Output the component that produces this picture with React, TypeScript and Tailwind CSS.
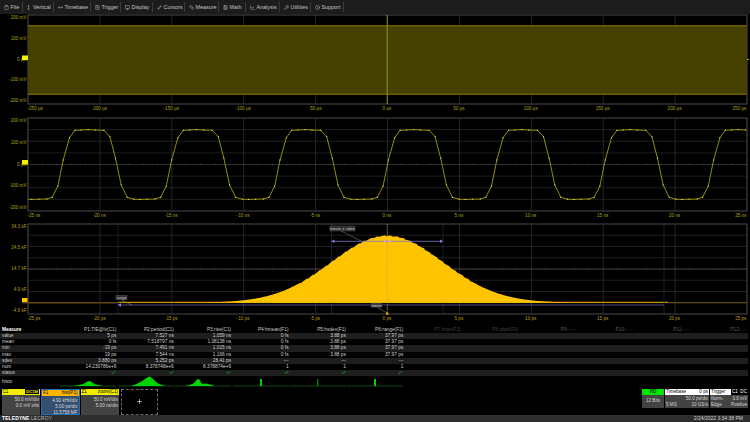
import {
  Check,
  ChartLine,
  Calculator,
  Clipboard,
  Info,
  Monitor,
  MoveDiagonal,
  MoveHorizontal,
  MoveVertical,
  Plus,
  Ruler,
  SquareArrowUp,
  Wrench,
} from "lucide-react";
import type { ReactNode } from "react";

const menu = [
  { name: "File", Icon: Clipboard, w: "w-[22.5px]" },
  { name: "Vertical", Icon: MoveVertical, w: "w-[31.5px]" },
  { name: "Timebase", Icon: MoveHorizontal, w: "w-[37px]" },
  { name: "Trigger", Icon: SquareArrowUp, w: "w-[30px]" },
  { name: "Display", Icon: Monitor, w: "w-[32px]" },
  { name: "Cursors", Icon: MoveDiagonal, w: "w-[32px]" },
  { name: "Measure", Icon: Ruler, w: "w-[34px]" },
  { name: "Math", Icon: Calculator, w: "w-[27px]" },
  { name: "Analysis", Icon: ChartLine, w: "w-[34px]" },
  { name: "Utilities", Icon: Wrench, w: "w-[31px]" },
  { name: "Support", Icon: Info, w: "w-[33px]" },
];

const headers = [
  ["P1:TIE@lv(C1)", "text-[#c8c8c8]"],
  ["P2:period(C1)", "text-[#c8c8c8]"],
  ["P3:rise(C1)", "text-[#c8c8c8]"],
  ["P4:hmean(F1)", "text-[#c8c8c8]"],
  ["P5:hsdev(F1)", "text-[#c8c8c8]"],
  ["P6:range(F1)", "text-[#c8c8c8]"],
  ["P7:fmax(F3)", "text-[#3f3f3f]"],
  ["P8:pkpk(F3)", "text-[#3f3f3f]"],
  ["P9:- - -", "text-[#5a5a5a]"],
  ["P10:- - -", "text-[#5a5a5a]"],
  ["P11:- - -", "text-[#5a5a5a]"],
  ["P12:- - -", "text-[#5a5a5a]"],
];

const rows = [
  { name: "value", cells: ["5 ps", "7.527 ns", "1.059 ns", "0 fs", "3.88 ps", "37.97 ps"] },
  { name: "mean", cells: ["0 fs", "7.518797 ns", "1.08138 ns", "0 fs", "3.88 ps", "37.97 ps"] },
  { name: "min", cells: ["-19 ps", "7.491 ns", "1.015 ns", "0 fs", "3.88 ps", "37.97 ps"] },
  { name: "max", cells: ["19 ps", "7.544 ns", "1.166 ns", "0 fs", "3.88 ps", "37.97 ps"] },
  { name: "sdev", cells: ["3.880 ps", "5.252 ps", "28.41 ps", "---", "---", "---"] },
  { name: "num", cells: ["14.230786e+6", "8.378748e+6", "8.378874e+6", "1", "1", "1"] },
  { name: "status", cells: ["ok", "ok", "ok", "ok", "ok", "ok"] },
];

function Grid({ h, center = "#3a3a3a" }: { h: number; center?: string }) {
  const xs = Array.from({ length: 11 }, (_, i) => i * 71.9);
  const ys = Array.from({ length: 9 }, (_, i) => (i * h) / 8);
  const ticks = Array.from({ length: 51 }, (_, i) => i * 14.38);
  return (
    <g>
      {ys.map((y, i) => (
        <line key={i} x1={0} x2={719} y1={y} y2={y} stroke={i === 4 ? center : "#262626"} strokeWidth={0.8} />
      ))}
      {xs.map((x, i) => (
        <line key={i} x1={x} x2={x} y1={0} y2={h} stroke="#2e2e2e" strokeWidth={0.8} />
      ))}
      {ticks.map((x, i) => (
        <line key={i} x1={x} x2={x} y1={h / 2 - 1} y2={h / 2 + 1} stroke="#4a4a4a" strokeWidth={0.5} />
      ))}
      <rect x={0} y={0} width={719} height={h} fill="none" stroke="#3c3c3c" strokeWidth={1} />
    </g>
  );
}

function Panel({
  h,
  yLabels,
  xLabels,
  color,
  labelH,
  children,
}: {
  h: number;
  yLabels: string[];
  xLabels: string[];
  color: string;
  labelH: string;
  children: ReactNode;
}) {
  const heightClass = h === 89 ? "h-[89px]" : h === 93 ? "h-[93px]" : "h-[90px]";
  return (
    <div className="flex flex-col shrink-0">
      <div className={"flex " + heightClass}>
        <div className={"w-[27.5px] shrink-0 flex flex-col justify-between items-end pr-[1px] text-[4.6px] leading-[6px] " + color}>
          {yLabels.map((l) => (
            <span key={l} className="whitespace-nowrap">
              {l}
            </span>
          ))}
        </div>
        <svg className="w-[719px] shrink-0 overflow-visible" height={h} viewBox={"0 0 719 " + h}>
          <Grid h={h} center={h === 90 ? "#555555" : "#3a3a3a"} />
          {children}
        </svg>
      </div>
      <div className={"pl-[27.5px] w-[746.5px] " + labelH}>
        <div className={"flex justify-between text-[4.6px] leading-[9px] " + color}>
          {xLabels.map((l, i) => (
            <span
              key={l}
              className={
                "w-0 flex whitespace-nowrap " +
                (i === 0 ? "justify-start" : i === xLabels.length - 1 ? "justify-end" : "justify-center")
              }
            >
              {l}
            </span>
          ))}
        </div>
      </div>
    </div>
  );
}

// one period of the C1 zoom trace, pixels from the period start
const period: [number, number][] = [
  [0, 79.3],
  [5.7, 68],
  [11, 42],
  [17.3, 19.7],
  [22.7, 12.3],
  [29, 12],
  [36, 11.6],
  [43, 12],
  [51.7, 12.3],
  [57.7, 18.7],
  [63.3, 40.3],
  [69, 67],
  [75, 79.3],
  [81.7, 81.2],
  [88, 81.4],
  [95, 81.2],
  [103, 81],
];

function tracePoints() {
  const pts: [number, number][] = [];
  for (let n = -1; n < 8; n++) {
    const start = 24.2 + n * 108.4;
    period.forEach(([x, y]) => pts.push([start + x, y]));
  }
  return pts.filter(([x]) => x > -4 && x < 723);
}

function ZoomTrace() {
  const pts = tracePoints();
  return (
    <g>
      <clipPath id="zoomclip">
        <rect x={0} y={0} width={719} height={93} />
      </clipPath>
      <g clipPath="url(#zoomclip)">
        <polyline points={pts.map((p) => p.join(",")).join(" ")} fill="none" stroke="#b5ad14" strokeWidth={0.8} />
        {pts.map(([x, y], i) => (
          <rect key={i} x={x - 0.5} y={y - 0.5} width={1} height={1} fill="#ffff40" />
        ))}
      </g>
    </g>
  );
}

function gaussianPath() {
  const center = 359.2;
  const sigma = 55.8;
  const base = 78.7;
  let d = "M 90 " + base;
  for (let x = 90; x <= 640; x += 1) {
    const noise = ((x * 7919) % 13) / 13 - 0.5;
    const v = 67 * Math.exp(-((x - center) ** 2) / (2 * sigma * sigma));
    d += " L " + x + " " + (base - v - noise * (v > 20 ? 1.1 : 0)).toFixed(1);
  }
  return d + " L 640 " + base + " Z";
}

function Histogram() {
  return (
    <g>
      <line x1={-6} x2={90} y1={78.7} y2={78.7} stroke="#5c4708" strokeWidth={1.4} />
      <line x1={90} x2={640} y1={78.4} y2={78.4} stroke="#c29200" strokeWidth={1.2} />
      <line x1={640} x2={719} y1={78.7} y2={78.7} stroke="#5c4708" strokeWidth={1.2} />
      {[90, 303.5, 415, 636].map((x) => (
        <line key={x} x1={x} x2={x} y1={0} y2={90} stroke="#34346a" strokeWidth={0.8} strokeDasharray="1.5 1" />
      ))}
      <path d={gaussianPath()} fill="#ffc400" />
      <line x1={359.2} x2={359.2} y1={0} y2={90} stroke="#b8a060" strokeWidth={0.6} strokeDasharray="1.5 1" />
      <line x1={90} x2={636} y1={81} y2={81} stroke="#5a5a9c" strokeWidth={0.8} />
      <line x1={303.5} x2={415} y1={17.3} y2={17.3} stroke="#7a7ac8" strokeWidth={0.8} />
      <polygon points="303.5,17.3 306.5,15.5 306.5,19.1" fill="#8080e0" />
      <polygon points="415,17.3 412,15.5 412,19.1" fill="#8080e0" />
      <polygon points="90,81 93,79.2 93,82.8" fill="#8080e0" />
      <polygon points="355,17.3 357.6,15.5 357.6,19.1" fill="#e0a0f0" />
      <polygon points="363.4,17.3 360.8,15.5 360.8,19.1" fill="#e0a0f0" />
      <line x1={313} x2={333} y1={7} y2={17} stroke="#8a8a8a" strokeWidth={0.5} />
      <line x1={93} x2={104} y1={76} y2={81} stroke="#8a8a70" strokeWidth={0.5} />
      <line x1={350} x2={360} y1={84} y2={89.5} stroke="#8a8a8a" strokeWidth={0.5} />
      <rect x={302} y={2} width={25} height={5} fill="#2c2c2c" stroke="#777777" strokeWidth={0.3} />
      <text x={314.5} y={6} textAnchor="middle" fontSize={4.4} fill="#d0d0d0">
        mean ± sdev
      </text>
      <rect x={88} y={71.4} width={11} height={4.4} fill="#2c2c2c" stroke="#888888" strokeWidth={0.3} />
      <text x={93.5} y={75} textAnchor="middle" fontSize={4} fill="#d0d0d0">
        range
      </text>
      <rect x={343} y={79} width={11} height={4.6} fill="#3a3a3a" />
      <text x={348.5} y={82.8} textAnchor="middle" fontSize={4} fill="#d0d0d0">
        mean
      </text>
      <rect x={358} y={88.5} width={2.4} height={2.4} fill="#e09a00" />
    </g>
  );
}

function GreenHist({ d }: { d: string }) {
  return (
    <svg className="w-[56px] h-[11px]" viewBox="0 0 56 11">
      <line x1={0} x2={56} y1={10} y2={10} stroke="#0a4a0a" strokeWidth={1} />
      <path d={d} fill="#00d400" />
    </svg>
  );
}

const histos = [
  "M 12 10 Q 22 9 25 7 Q 28 5 29 5 Q 31 5 33 7 Q 37 9.5 44 10 Z",
  "M 13 10 Q 22 7 27 3 Q 30 0.5 31 0.5 Q 33 0.5 36 4 Q 40 8.5 47 10 Z",
  "M 10 10 Q 17 9 20 6 Q 22 3 23 3 Q 25 3 26 7 Q 28 8 31 7.5 Q 35 8 39 10 Z",
  "M 27 3 H 29 V 10 H 27 Z",
  "M 27.4 3 H 28.2 V 10 H 27.4 Z",
  "M 27 3 H 29 V 10 H 27 Z",
];

function Descriptor({
  name,
  right,
  lines,
  head,
  boxed,
}: {
  name: string;
  right: ReactNode;
  lines: string[];
  head: string;
  boxed?: boolean;
}) {
  return (
    <div className={"w-[38.5px] h-[26px] flex flex-col " + (boxed ? "bg-[#35506e] border border-[#1d6fb8]" : "bg-[#434343]")}>
      <div className={"h-[6px] flex items-center justify-between px-[1px] text-black text-[4.6px] leading-[6px] shrink-0 " + head}>
        <span>{name}</span>
        {right}
      </div>
      <div className="flex flex-col items-end pr-[1px] pt-[2px] text-[4.6px] leading-[5.8px] text-[#d8d8d8]">
        {lines.map((l) => (
          <span key={l} className="whitespace-nowrap">
            {l}
          </span>
        ))}
      </div>
    </div>
  );
}

export default function App() {
  return (
    <div className="w-[750px] h-[422px] overflow-hidden bg-black flex flex-col font-['Liberation_Sans',Arial,sans-serif]">
      <div className="h-[14px] mb-[1px] shrink-0 bg-[#1c1c1c] flex items-center text-[5.4px] text-[#c4c4c4]">
        {menu.map(({ name, Icon, w }) => (
          <div key={name} className={"h-[10px] flex items-center gap-[2px] pl-[3.5px] border-r border-[#3a3a3a] shrink-0 " + w}>
            <Icon size={5} strokeWidth={2} className="shrink-0" />
            <span>{name}</span>
          </div>
        ))}
      </div>

      <Panel
        h={89}
        labelH="h-[14px]"
        color="text-[#a8a414]"
        yLabels={["200 mV", "100 mV", "0 µV", "-100 mV", "-200 mV"]}
        xLabels={["-250 µs", "-200 µs", "-150 µs", "-100 µs", "-50 µs", "0 µs", "50 µs", "100 µs", "150 µs", "200 µs", "250 µs"]}
      >
        <rect x={0} y={10.5} width={719} height={69} fill="#453f00" />
        <rect x={0} y={10.2} width={719} height={1.2} fill="#746d00" />
        <rect x={0} y={78.6} width={719} height={1.2} fill="#746d00" />
        <line x1={359.2} x2={359.2} y1={0} y2={89} stroke="#a49c10" strokeWidth={0.9} />
        <rect x={-6} y={40.5} width={6} height={4.6} fill="#f5f000" />
        <rect x={719} y={44} width={2} height={1} fill="#a8a414" />
      </Panel>

      <Panel
        h={93}
        labelH="h-[13px]"
        color="text-[#a8a414]"
        yLabels={["200 mV", "100 mV", "0 µV", "-100 mV", "-200 mV"]}
        xLabels={["-25 ns", "-20 ns", "-15 ns", "-10 ns", "-5 ns", "0 ns", "5 ns", "10 ns", "15 ns", "20 ns", "25 ns"]}
      >
        <ZoomTrace />
        <rect x={-6} y={42} width={6} height={4.6} fill="#f5f000" />
      </Panel>

      <Panel
        h={90}
        labelH="h-[12px]"
        color="text-[#b89a1c]"
        yLabels={["34.3 kF", "24.5 kF", "14.7 kF", "4.9 kF", "-4.9 kF"]}
        xLabels={["-25 ps", "-20 ps", "-15 ps", "-10 ps", "-5 ps", "0 ps", "5 ps", "10 ps", "15 ps", "20 ps", "25 ps"]}
      >
        <Histogram />
        <rect x={-6} y={74} width={5.5} height={4} fill="#ffc400" />
      </Panel>

      <div className="grid grid-cols-[59px_repeat(12,57.4px)] grid-rows-[7px_repeat(7,6.2px)_12.6px] shrink-0 text-[4.8px] text-[#cfcfcf]">
        <div className="pl-[2px] font-bold leading-[7px] text-white">Measure</div>
        {headers.map(([h, c]) => (
          <div key={h} className={"text-right leading-[7px] whitespace-nowrap " + c}>
            {h}
          </div>
        ))}
        {rows.map((r, ri) => {
          const band = ri % 2 === 0 ? "bg-[#1e1e1e]" : "";
          return (
            <div key={r.name} className={"col-span-13 grid grid-cols-[59px_repeat(12,57.4px)] leading-[6.2px] " + band}>
              <div className="pl-[2px]">{r.name}</div>
              {r.cells.map((c, i) => (
                <div key={i} className="text-right whitespace-nowrap flex justify-end">
                  {c === "ok" ? <Check size={5} strokeWidth={3.5} className="text-[#22c322]" /> : c}
                </div>
              ))}
            </div>
          );
        })}
        <div className="pl-[2px] pt-[3px] leading-[6px]">histo</div>
        {histos.map((d, i) => (
          <div key={i} className="flex justify-end items-end pb-[1.5px]">
            <GreenHist d={d} />
          </div>
        ))}
      </div>

      <div className="h-[26px] shrink-0 flex items-start justify-between pl-[1.5px] pr-[2px]">
        <div className="flex gap-[1px]">
          <Descriptor
            name="C1"
            head="bg-[#f2ec00]"
            right={<span className="bg-black text-[#f2ec00] px-[1px] text-[4.2px] leading-[5px] font-bold">DC1M</span>}
            lines={["50.0 mV/div", "0.0 mV ofst"]}
          />
          <Descriptor name="F1" head="bg-[#ffb400]" right={<span>hist(P1)</span>} lines={["4.90 kHit/div", "5.00 ps/div", "11.5758 MF"]} boxed />
          <Descriptor name="Z1" head="bg-[#f2ec00]" right={<span>zoom(C1)</span>} lines={["50.0 mV/div", "5.00 ns/div"]} />
          <div className="w-[37.5px] h-[26px] border border-dashed border-[#666666] flex items-center justify-center text-[#cfcfcf] ml-[0.5px]">
            <Plus size={7} strokeWidth={2.5} />
          </div>
        </div>

        <div className="flex gap-[1px] text-[4.6px] text-[#d4d4d4]">
          <div className="w-[22px] h-[19.5px] bg-[#434343] flex flex-col">
            <div className="h-[6.2px] bg-[#00e600] text-black text-center leading-[6.2px]">HD</div>
            <div className="flex-1 flex items-center justify-center">12 Bits</div>
          </div>
          <div className="w-[44px] h-[19.5px] bg-[#434343] flex flex-col leading-[5.6px]">
            <div className="h-[6.2px] bg-white text-black flex justify-between px-[1px] leading-[6.2px]">
              <span>Timebase</span>
              <span>0 ps</span>
            </div>
            <div className="text-right pr-[1px] pt-[1px]">50.0 ps/div</div>
            <div className="flex justify-between px-[1px]">
              <span>5 MS</span>
              <span>10 GS/s</span>
            </div>
          </div>
          <div className="w-[38px] h-[19.5px] bg-[#434343] flex flex-col leading-[5.6px]">
            <div className="h-[6.2px] bg-white text-black flex items-center justify-between pl-[1px] leading-[6.2px]">
              <span>Trigger</span>
              <span className="flex gap-[0.5px]">
                <span className="bg-black text-white px-[1px]">C1</span>
                <span className="bg-black text-white px-[1px]">DC</span>
              </span>
            </div>
            <div className="flex justify-between px-[1px] pt-[1px]">
              <span>Norm.</span>
              <span>0.0 mV</span>
            </div>
            <div className="flex justify-between px-[1px]">
              <span>Edge</span>
              <span>Positive</span>
            </div>
          </div>
        </div>
      </div>

      <div className="h-[7px] shrink-0 bg-[#2d2d2d] flex items-center justify-between pl-[2px] pr-[7px] text-[5px] leading-[7px]">
        <span className="tracking-[0.1px]">
          <span className="font-bold text-white">TELEDYNE</span> <span className="text-[#b4b4b4]">LECROY</span>
        </span>
        <span className="text-[#d4d4d4]">2/24/2022 3:34:38 PM</span>
      </div>
    </div>
  );
}
